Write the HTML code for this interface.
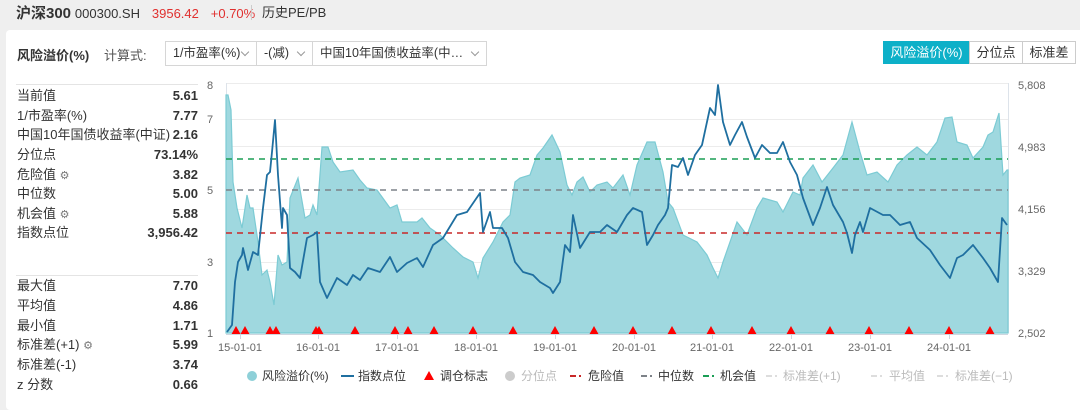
<!DOCTYPE html>
<html><head><meta charset="utf-8"><style>
*{margin:0;padding:0;box-sizing:border-box}
body{width:1080px;height:404px;background:#efefef;font-family:"Liberation Sans","Noto Sans CJK SC",sans-serif;position:relative;overflow:hidden;color:#333}
.a{position:absolute;white-space:nowrap}
.panel{position:absolute;left:6px;top:30px;width:1080px;height:380px;background:#fff;border-radius:4px}
.sel{position:absolute;top:41px;height:25px;border:1px solid #d6d6d6;font-size:12.5px;line-height:23px;padding-left:7px;color:#333}
.sel i{position:absolute;right:8px;top:7px;width:6px;height:6px;border-right:1px solid #999;border-bottom:1px solid #999;transform:rotate(45deg)}
.row{position:absolute;left:17px;width:181px;font-size:13px;height:20px;line-height:20px}
.row b{position:absolute;right:0;font-weight:bold;color:#333}
.tab{position:absolute;top:41px;height:23px;font-size:13px;line-height:21px;text-align:center;border:1px solid #ccc;color:#333}
</style></head><body>
<div class="a" style="left:16px;top:4px;font-size:14px;line-height:18px"><b style="font-size:15px">沪深300</b> <span style="font-size:13px">000300.SH</span> <span style="color:#e0302f;font-size:13px;margin-left:8px">3956.42</span> <span style="color:#e0302f;font-size:13px;margin-left:8px">+0.70%</span></div>
<div class="a" style="left:251px;top:5px;width:1px;height:15px;background:#ccc"></div>
<div class="a" style="left:262px;top:4px;font-size:13px;line-height:18px">历史PE/PB</div>
<div class="panel"></div>
<div class="a" style="left:17px;top:45px;font-size:13px;font-weight:bold">风险溢价(%)</div>
<div class="a" style="left:104px;top:45px;font-size:13px;color:#555">计算式:</div>
<div class="sel" style="left:165px;width:92px">1/市盈率(%)<i></i></div>
<div class="sel" style="left:256px;width:57px">-(减)<i></i></div>
<div class="sel" style="left:312px;width:175px">中国10年国债收益率(中…<i></i></div>
<div class="tab" style="left:883px;width:87px;background:#0db0c8;border-color:#0db0c8;color:#fff">风险溢价(%)</div>
<div class="tab" style="left:969px;width:54px">分位点</div>
<div class="tab" style="left:1022px;width:54px">标准差</div>
<div class="a" style="left:16px;top:84px;width:182px;height:1px;background:#e4e4e4"></div>
<div class="a" style="left:16px;top:275px;width:182px;height:1px;background:#e4e4e4"></div>
<div class="row" style="top:86px">当前值<b>5.61</b></div>
<div class="row" style="top:106px">1/市盈率(%)<b>7.77</b></div>
<div class="row" style="top:125px">中国10年国债收益率(中证)<b>2.16</b></div>
<div class="row" style="top:145px">分位点<b>73.14%</b></div>
<div class="row" style="top:165px">危险值 <span style="color:#777;font-size:11px">⚙</span><b>3.82</b></div>
<div class="row" style="top:184px">中位数<b>5.00</b></div>
<div class="row" style="top:204px">机会值 <span style="color:#777;font-size:11px">⚙</span><b>5.88</b></div>
<div class="row" style="top:223px">指数点位<b>3,956.42</b></div>
<div class="row" style="top:276px">最大值<b>7.70</b></div>
<div class="row" style="top:296px">平均值<b>4.86</b></div>
<div class="row" style="top:316px">最小值<b>1.71</b></div>
<div class="row" style="top:335px">标准差(+1) <span style="color:#777;font-size:11px">⚙</span><b>5.99</b></div>
<div class="row" style="top:355px">标准差(-1)<b>3.74</b></div>
<div class="row" style="top:375px">z 分数<b>0.66</b></div>

<svg class="a" style="left:0;top:0" width="1080" height="404" font-family="Liberation Sans, sans-serif">
<g stroke="#ececec" stroke-width="1">
<line x1="226" y1="83.5" x2="1008" y2="83.5"/><line x1="226" y1="119.5" x2="1008" y2="119.5"/><line x1="226" y1="146.5" x2="1008" y2="146.5"/><line x1="226" y1="209.5" x2="1008" y2="209.5"/><line x1="226" y1="262.5" x2="1008" y2="262.5"/><line x1="226" y1="271.5" x2="1008" y2="271.5"/>
</g>
<line x1="226.5" y1="83" x2="226.5" y2="333" stroke="#dde3ea"/><line x1="1008.5" y1="83" x2="1008.5" y2="333" stroke="#dde3ea"/>
<polygon fill="#9fd8df" stroke="#7ccbd4" stroke-width="1.2" points="226,333 226,95 228,95 231,110 233,182 237,208 242,228 247,195 250,208 253,208 258,242 262,275 267,270 270,282 274,305 278,255 282,265 287,262 290,198 298,178 305,218 310,215 313,205 317,215 322,147 328,147 333,162 340,172 353,170 360,180 367,188 377,190 390,208 397,205 402,222 417,222 422,218 430,228 440,235 453,248 463,257 473,262 478,278 483,258 493,242 503,222 510,215 515,182 520,178 530,175 537,155 543,148 552,135 560,152 567,185 572,195 577,182 583,177 590,192 597,185 607,182 613,188 623,175 630,195 637,165 647,142 655,142 663,172 668,202 673,208 683,235 697,242 707,255 713,268 718,278 723,262 737,222 747,235 757,208 763,198 777,202 783,212 793,192 800,195 803,178 813,165 822,182 833,168 843,155 852,122 860,152 867,175 877,172 888,182 897,165 907,155 917,147 927,155 937,142 945,118 952,117 957,142 967,145 973,158 983,147 988,135 993,132 999,113 1003,175 1007,170 1008,170 1008,333"/>
<line x1="226" y1="159" x2="1008" y2="159" stroke="#1a9e55" stroke-width="1.6" stroke-dasharray="6,5"/>
<line x1="226" y1="190" x2="1008" y2="190" stroke="#7d8288" stroke-width="1.6" stroke-dasharray="6,5"/>
<line x1="226" y1="233" x2="1008" y2="233" stroke="#c82828" stroke-width="1.6" stroke-dasharray="6,5"/>
<polyline fill="none" stroke="#1f6fa0" stroke-width="1.8" stroke-linejoin="round" points="227,332 232,325 235,282 238,262 242,255 243,248 248,270 253,252 258,255 263,208 267,175 270,172 272,152 275,120 278,175 282,228 283,208 287,215 290,268 295,272 300,278 307,238 313,235 317,232 320,282 327,298 330,292 337,278 347,285 353,275 360,280 368,268 380,272 390,257 397,272 407,263 417,258 423,267 433,245 443,238 457,215 467,212 480,193 483,232 490,212 493,228 502,228 508,238 515,262 523,272 533,275 540,282 550,288 553,293 560,282 565,245 570,252 573,215 580,248 590,232 600,232 607,225 617,232 627,215 633,208 642,212 647,245 653,235 658,225 665,215 668,208 672,165 678,167 683,158 688,175 695,155 702,145 710,108 715,115 718,85 723,122 730,145 735,135 742,122 747,137 755,158 762,145 770,153 777,153 783,142 790,162 797,175 803,198 813,225 820,208 827,187 833,205 843,222 847,233 852,253 855,235 860,222 863,232 870,208 883,215 890,215 900,225 910,222 917,238 930,250 940,265 950,278 957,258 963,255 973,245 983,258 990,268 998,282 1002,218 1007,225"/>
<g fill="#f00">
<path d="M0,-5 L5,4 L-5,4Z" transform="translate(236,331)"/>
<path d="M0,-5 L5,4 L-5,4Z" transform="translate(245,331)"/><path d="M0,-5 L5,4 L-5,4Z" transform="translate(270,331)"/><path d="M0,-5 L5,4 L-5,4Z" transform="translate(276,331)"/><path d="M0,-5 L5,4 L-5,4Z" transform="translate(316,331)"/><path d="M0,-5 L5,4 L-5,4Z" transform="translate(319,331)"/><path d="M0,-5 L5,4 L-5,4Z" transform="translate(355,331)"/><path d="M0,-5 L5,4 L-5,4Z" transform="translate(395,331)"/><path d="M0,-5 L5,4 L-5,4Z" transform="translate(408,331)"/><path d="M0,-5 L5,4 L-5,4Z" transform="translate(434,331)"/><path d="M0,-5 L5,4 L-5,4Z" transform="translate(473,331)"/><path d="M0,-5 L5,4 L-5,4Z" transform="translate(513,331)"/><path d="M0,-5 L5,4 L-5,4Z" transform="translate(555,331)"/><path d="M0,-5 L5,4 L-5,4Z" transform="translate(594,331)"/><path d="M0,-5 L5,4 L-5,4Z" transform="translate(633,331)"/><path d="M0,-5 L5,4 L-5,4Z" transform="translate(672,331)"/><path d="M0,-5 L5,4 L-5,4Z" transform="translate(711,331)"/><path d="M0,-5 L5,4 L-5,4Z" transform="translate(752,331)"/><path d="M0,-5 L5,4 L-5,4Z" transform="translate(791,331)"/><path d="M0,-5 L5,4 L-5,4Z" transform="translate(830,331)"/><path d="M0,-5 L5,4 L-5,4Z" transform="translate(869,331)"/><path d="M0,-5 L5,4 L-5,4Z" transform="translate(909,331)"/><path d="M0,-5 L5,4 L-5,4Z" transform="translate(949,331)"/><path d="M0,-5 L5,4 L-5,4Z" transform="translate(990,331)"/>
</g>
<line x1="226" y1="334.5" x2="1008" y2="334.5" stroke="#cfd6df"/>
<g font-size="11" fill="#666">
<text x="207" y="89">8</text><text x="207" y="123">7</text><text x="207" y="194">5</text><text x="207" y="266">3</text><text x="207" y="337">1</text>
<text x="1018" y="89">5,808</text><text x="1018" y="151">4,983</text><text x="1018" y="213">4,156</text><text x="1018" y="275">3,329</text><text x="1018" y="337">2,502</text>
<g text-anchor="middle"><text x="240" y="351">15-01-01</text><text x="318" y="351">16-01-01</text><text x="397" y="351">17-01-01</text><text x="476" y="351">18-01-01</text><text x="555" y="351">19-01-01</text><text x="634" y="351">20-01-01</text><text x="712" y="351">21-01-01</text><text x="791" y="351">22-01-01</text><text x="870" y="351">23-01-01</text><text x="949" y="351">24-01-01</text></g>
</g>
<g stroke="#cfd6df"><line x1="240.5" y1="334" x2="240.5" y2="339"/><line x1="318.5" y1="334" x2="318.5" y2="339"/><line x1="397.5" y1="334" x2="397.5" y2="339"/><line x1="476.5" y1="334" x2="476.5" y2="339"/><line x1="555.5" y1="334" x2="555.5" y2="339"/><line x1="634.5" y1="334" x2="634.5" y2="339"/><line x1="712.5" y1="334" x2="712.5" y2="339"/><line x1="791.5" y1="334" x2="791.5" y2="339"/><line x1="870.5" y1="334" x2="870.5" y2="339"/><line x1="949.5" y1="334" x2="949.5" y2="339"/></g>
<g font-size="12">
<circle cx="252" cy="376" r="5" fill="#8ed0d8"/><text x="262" y="380" fill="#333">风险溢价(%)</text>
<rect x="341" y="375" width="13" height="2" fill="#1f6fa0"/><text x="358" y="380" fill="#333">指数点位</text>
<path d="M429,371 L434,380 L424,380Z" fill="#f00"/><text x="440" y="380" fill="#333">调仓标志</text>
<circle cx="510" cy="376" r="5" fill="#ccc"/><text x="521" y="380" fill="#bbb">分位点</text>
<g stroke-width="2"><line x1="570" y1="376" x2="576" y2="376" stroke="#c82828"/><line x1="579" y1="376" x2="581" y2="376" stroke="#c82828"/>
<line x1="641" y1="376" x2="647" y2="376" stroke="#7d8288"/><line x1="650" y1="376" x2="652" y2="376" stroke="#7d8288"/>
<line x1="703" y1="376" x2="709" y2="376" stroke="#1a9e55"/><line x1="712" y1="376" x2="714" y2="376" stroke="#1a9e55"/>
<line x1="766" y1="376" x2="772" y2="376" stroke="#ddd"/><line x1="775" y1="376" x2="777" y2="376" stroke="#ddd"/>
<line x1="871" y1="376" x2="877" y2="376" stroke="#ddd"/><line x1="880" y1="376" x2="882" y2="376" stroke="#ddd"/>
<line x1="937" y1="376" x2="943" y2="376" stroke="#ddd"/><line x1="946" y1="376" x2="948" y2="376" stroke="#ddd"/></g>
<text x="588" y="380" fill="#333">危险值</text><text x="658" y="380" fill="#333">中位数</text><text x="720" y="380" fill="#333">机会值</text>
<text x="783" y="380" fill="#bbb">标准差(+1)</text><text x="889" y="380" fill="#bbb">平均值</text><text x="955" y="380" fill="#bbb">标准差(−1)</text>
</g>
</svg>
</body></html>
